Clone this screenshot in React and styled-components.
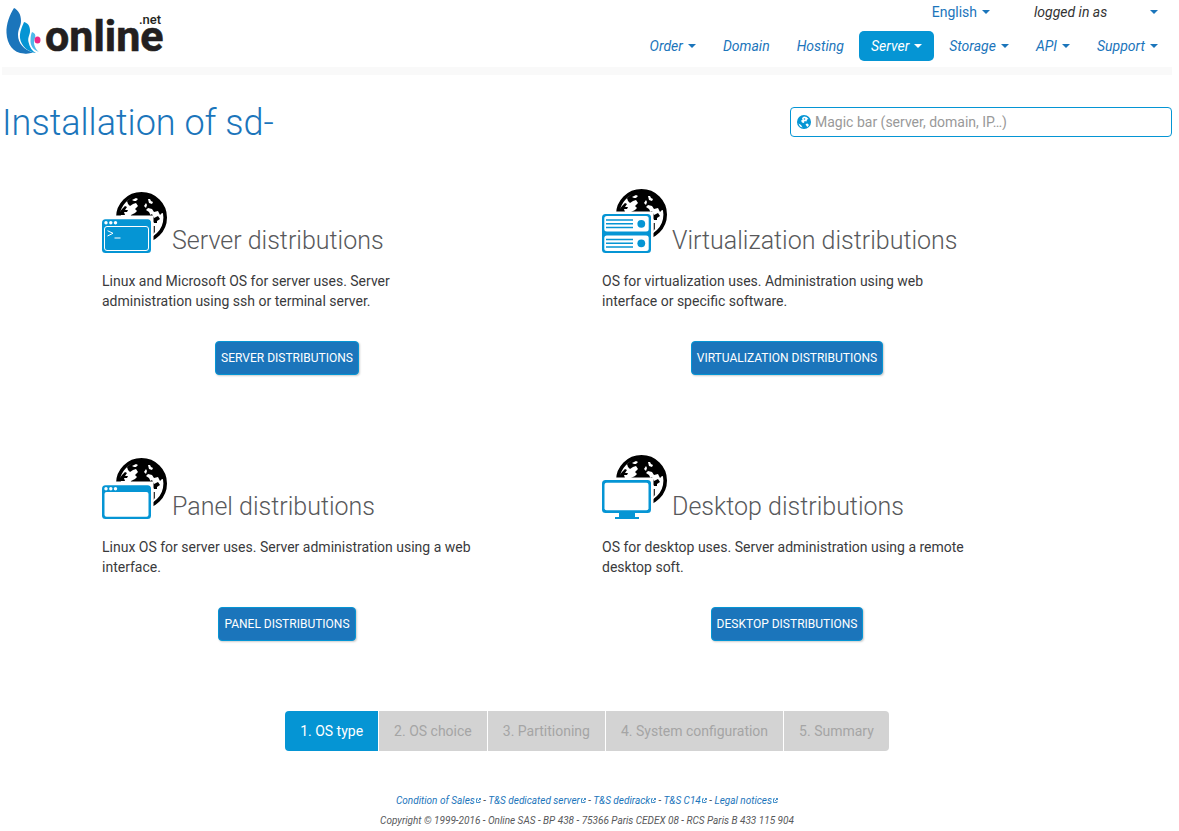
import React from "react";
import styled, { createGlobalStyle, css } from "styled-components";

const BLUE = "#1b75bb";
const CYAN = "#0595d4";

const Global = createGlobalStyle`
  *, *::before, *::after { box-sizing: border-box; }
  body {
    margin: 0;
    background: #fff;
    color: #3a3a3c;
    font: 14px/20px Roboto, "Liberation Sans", sans-serif;
  }
  a { text-decoration: none; }
`;

const Page = styled.div`
  padding: 0 7px 0 2px;
`;

const Header = styled.header`
  display: flex;
  justify-content: space-between;
  align-items: flex-start;
  height: 75px;
  border-bottom: 8px solid #f9f9f9;
`;

const HomeLink = styled.a`
  display: block;
  padding: 4px 0 0 4px;
  svg { display: block; overflow: visible; }
`;

const Navigation = styled.div`
  display: flex;
  flex-direction: column;
  align-items: flex-end;
  padding: 2px 2px 0 0;
`;

const TopBar = styled.div`
  display: flex;
  align-items: center;
  gap: 44px;
  padding-right: 12px;
  color: #333;
`;

const Account = styled.span`
  display: flex;
  justify-content: space-between;
  width: 124px;
  font-style: italic;
`;

const MenuButton = styled.button`
  display: flex;
  align-items: center;
  gap: 5px;
  padding: 0;
  border: 0;
  background: none;
  color: ${BLUE};
  font: inherit;
`;

const MainNav = styled.nav`
  display: flex;
  gap: 3px;
  margin-top: 9px;
`;

const NavLink = styled.a`
  display: flex;
  align-items: center;
  gap: 5px;
  padding: 5px 12px;
  border-radius: 5px;
  font-style: italic;
  color: ${(p) => (p.$active ? "#fff" : BLUE)};
  background: ${(p) => (p.$active ? CYAN : "transparent")};
`;

const Caret = styled.span`
  border: 4px solid transparent;
  border-top-color: currentColor;
  border-bottom: 0;
`;

const TitleRow = styled.div`
  display: flex;
  justify-content: space-between;
  align-items: flex-start;
  margin-top: 28px;
`;

const Title = styled.h1`
  margin: 0;
  color: ${BLUE};
  font-size: 36px;
  line-height: 40px;
  font-weight: 300;
`;

const MagicBar = styled.label`
  display: flex;
  align-items: center;
  gap: 4px;
  width: 382px;
  height: 30px;
  margin-top: 4px;
  padding: 0 6px;
  border: 1px solid ${CYAN};
  border-radius: 4px;
`;

const MagicInput = styled.input`
  flex: 1;
  min-width: 0;
  padding: 0;
  border: 0;
  outline: 0;
  background: none;
  font: inherit;
  color: #333;
  &::placeholder { color: #999; opacity: 1; }
`;

const Grid = styled.main`
  display: grid;
  grid-template-columns: repeat(2, minmax(0, 370px));
  column-gap: 130px;
  row-gap: 78px;
  padding: 44px 100px 0;
`;

const Card = styled.section`
  display: flex;
  flex-direction: column;
  align-items: center;
`;

const CardHead = styled.h2`
  display: flex;
  align-items: flex-end;
  align-self: stretch;
  gap: 5px;
  height: 68px;
  margin: 0;
  color: #58595b;
  font-size: 25px;
  line-height: 28px;
  font-weight: 300;
  white-space: nowrap;
  svg { flex: none; }
`;

const CardText = styled.p`
  align-self: stretch;
  margin: 16px 0 30px;
`;

const ActionButton = styled.button`
  height: 34px;
  padding: 0 5px;
  border: 1px solid ${CYAN};
  border-radius: 4px;
  background: ${BLUE};
  box-shadow: 1px 1px 2px rgba(0, 0, 0, 0.2);
  color: #fff;
  font: 12px/20px Roboto, sans-serif;
  text-transform: uppercase;
`;

const Steps = styled.ol`
  display: flex;
  justify-content: center;
  gap: 1px;
  margin: 70px 0 0;
  padding: 0;
  list-style: none;
`;

const Step = styled.li`
  padding: 10px 15px;
  background: #d3d3d3;
  color: #a5a5a5;
  &:first-child { border-radius: 4px 0 0 4px; }
  &:last-child { border-radius: 0 4px 4px 0; }
  ${(p) => p.$current && css`
    background: ${CYAN};
    color: #fff;
  `}
`;

const Footer = styled.footer`
  margin-top: 40px;
  color: #58595b;
  font-size: 10px;
  font-style: italic;
  text-align: center;
  p { margin: 0; }
`;

const FooterLink = styled.a`
  color: ${BLUE};
  svg { margin: 0 0 1px 1px; }
`;

const Logo = () => (
  <svg width="164" height="58" viewBox="0 0 164 58" role="img" aria-label="online.net">
    <path fill={BLUE} d="M8 4C12 6 15 10 15 17C15 22 12 25 12 31C12 39 18 46 27 48.500C24 49.500 21 50 18 49.500C7 49 1 40 .5 29C0 20 4 10 8 4z" />
    <path fill={CYAN} d="M18 18C22 19 24 22 24 27C24 31 21.500 33 22.500 38C23.500 43 26 47 30 49C22 48 15 42 14 34C13.500 28 16 23 18 18z" />
    <path fill="#4fb9ea" d="M26 28C29 29 30 31 29 34C27 38 28 44 33 48C27 46 24 41 24.500 36C24.500 33 25 30 26 28z" />
    <ellipse cx="31.500" cy="36" rx="3" ry="3.600" fill="#ed2a87" />
    <text x="39" y="47" fontFamily="Roboto, sans-serif" fontWeight="700" fontSize="43" fill="#231f20" stroke="#231f20" strokeWidth=".6">online</text>
    <text x="133" y="20" fontFamily="Roboto, sans-serif" fontWeight="500" fontSize="13" fill="#231f20">.net</text>
  </svg>
);

const Globe = ({ y }) => (
  <g transform={"translate(0 " + y + ")"}>
    <circle cx="39.500" cy="25.500" r="23.700" fill="#fff" stroke="#000" strokeWidth="3.600" />
    <path d="M25 9L31 4L44 2L54 6L60 14L63 22L60 21L58 23L56 19L52 20L50 17L46 16L44 18L47 20L49 24L46 28H28L29 23L33 21L35 19L33 17L36 14L34 11L31 12L28 14L26 12z" />
    <path d="M20 17L23 14L25 15L23 18L26 18L25 20L22 20L23 23L19 23L18 28H15L17 21zM47 24L50 22L52 26L56 24L58 27L55 29L55 31L52 31L50 28L47 28zM51.500 34H52.800V40L51.500 42z" />
    <path fill="#fff" d="M30 8L34 6L36 7L34 9L32 9zM46 7L48 7L49 9L51 10L50 12L47 11zM42 14L44 11L45 13L44 16z" />
  </g>
);

const WindowDots = () => (
  <g fill="#fff">
    <circle cx="4" cy="33.700" r="1.700" />
    <circle cx="8.800" cy="33.700" r="1.700" />
    <circle cx="13.500" cy="33.700" r="1.700" />
  </g>
);

const Window = ({ children }) => (
  <g>
    <path d="M0 26.500H51.500V66H0z" fill="#fff" />
    <rect y="30.300" width="49" height="33.700" rx="3.500" fill={CYAN} />
    <WindowDots />
    {children}
  </g>
);

const Bay = ({ y }) => (
  <g transform={"translate(0 " + y + ")"}>
    <rect x="2.300" width="44.400" height="15.500" rx="2.500" fill="#fff" />
    <path d="M4 4H31M4 7.800H31M4 11.500H31" stroke={CYAN} strokeWidth="1.600" />
    <circle cx="39.300" cy="7.800" r="3.900" fill={CYAN} />
  </g>
);

const pictures = {
  server: (
    <Window>
      <rect x="2.500" y="37.500" width="44" height="24" rx="2.500" fill="none" stroke="#fff" />
      <path d="M5.500 41.700L11 44.300L5.500 47M12.500 49H18.500" fill="none" stroke="#fff" />
    </Window>
  ),
  virtual: (
    <g>
      <path d="M0 22.500H51.500V66H0z" fill="#fff" />
      <rect y="25" width="49" height="39" rx="3.500" fill={CYAN} />
      <Bay y={27} />
      <Bay y={46.500} />
    </g>
  ),
  panel: (
    <Window>
      <rect x="2.500" y="37" width="44" height="24.700" rx="2" fill="#fff" />
    </Window>
  ),
  desktop: (
    <g>
      <path d="M0 22.500H51.500V66H0z" fill="#fff" />
      <rect y="25" width="49" height="33" rx="3.500" fill={CYAN} />
      <rect x="2.500" y="27.700" width="44" height="27.600" rx="2" fill="#fff" />
      <path d="M17 58H33V62H37V64H13V62H17z" fill={CYAN} />
    </g>
  ),
};

const DistributionIcon = ({ kind }) => (
  <svg width="65" height="66" viewBox="0 0 65 66" aria-hidden="true">
    <Globe y={kind === "server" || kind === "panel" ? 3 : 0} />
    {pictures[kind]}
  </svg>
);

const MagicIcon = () => (
  <svg width="14" height="14" viewBox="0 0 14 14" aria-hidden="true">
    <circle cx="7" cy="7" r="7" fill={CYAN} />
    <path fill="#fff" d="M5 3L7 1.500L9.500 2L11.500 4L10 4.500L9.500 6.500L7.500 6L7 8L5 7.500L4 5.500L5.500 5zM8.500 9L10.500 8.500L12 10L10.500 12L9.500 11zM1.500 8.500L4 10L5.500 12.500L3 11.500z" />
    <circle cx="7.500" cy="4" r=".8" fill={CYAN} />
  </svg>
);

const ExternalIcon = () => (
  <svg width="5" height="5" viewBox="0 0 5 5" fill="none" stroke="currentColor" strokeWidth=".8" aria-hidden="true">
    <path d="M2 .8H.5v3.700h3.500V3M2 3L4.500.5M3 .5h1.500V2" />
  </svg>
);

const cards = [
  { kind: "server", name: "Server distributions", text: "Linux and Microsoft OS for server uses. Server administration using ssh or terminal server." },
  { kind: "virtual", name: "Virtualization distributions", text: "OS for virtualization uses. Administration using web interface or specific software." },
  { kind: "panel", name: "Panel distributions", text: "Linux OS for server uses. Server administration using a web interface." },
  { kind: "desktop", name: "Desktop distributions", text: "OS for desktop uses. Server administration using a remote desktop soft." },
];

const menu = [["Order", true], ["Domain"], ["Hosting"], ["Server", true], ["Storage", true], ["API", true], ["Support", true]];
const steps = ["OS type", "OS choice", "Partitioning", "System configuration", "Summary"];
const legal = ["Condition of Sales", "T&S dedicated server", "T&S dedirack", "T&S C14", "Legal notices"];

export default function App() {
  return (
    <Page>
      <Global />
      <Header>
        <HomeLink href="#"><Logo /></HomeLink>
        <Navigation>
          <TopBar>
            <MenuButton type="button">English <Caret /></MenuButton>
            <Account>logged in as <MenuButton type="button" aria-label="Account"><Caret /></MenuButton></Account>
          </TopBar>
          <MainNav>
            {menu.map(([label, more]) => (
              <NavLink key={label} href="#" $active={label === "Server"}>{label}{more && <Caret />}</NavLink>
            ))}
          </MainNav>
        </Navigation>
      </Header>
      <TitleRow>
        <Title>Installation of sd-</Title>
        <MagicBar>
          <MagicIcon />
          <MagicInput aria-label="Magic bar" placeholder="Magic bar (server, domain, IP…)" />
        </MagicBar>
      </TitleRow>
      <Grid>
        {cards.map((c) => (
          <Card key={c.kind}>
            <CardHead><DistributionIcon kind={c.kind} />{c.name}</CardHead>
            <CardText>{c.text}</CardText>
            <ActionButton type="button">{c.name}</ActionButton>
          </Card>
        ))}
      </Grid>
      <Steps>
        {steps.map((s, i) => <Step key={s} $current={i === 0}>{i + 1}. {s}</Step>)}
      </Steps>
      <Footer>
        <p>
          {legal.map((l, i) => (
            <React.Fragment key={l}>
              {i > 0 && " - "}
              <FooterLink href="#">{l}<ExternalIcon /></FooterLink>
            </React.Fragment>
          ))}
        </p>
        <p>Copyright © 1999-2016 - Online SAS - BP 438 - 75366 Paris CEDEX 08 - RCS Paris B 433 115 904</p>
      </Footer>
    </Page>
  );
}
